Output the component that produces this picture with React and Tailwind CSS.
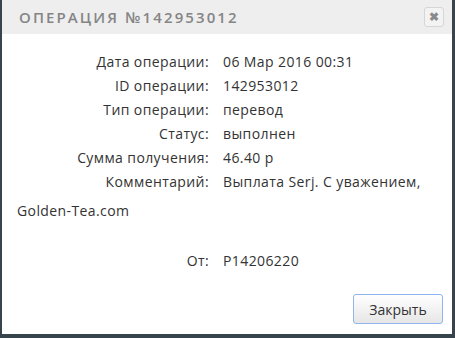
export default function App() {
  const rows = [
    ["Дата операции:", "06 Мар 2016 00:31"],
    ["ID операции:", "142953012"],
    ["Тип операции:", "перевод"],
    ["Статус:", "выполнен"],
    ["Сумма получения:", "46.40 р"],
    ["Комментарий:", "Выплата Serj. С уважением,"],
  ];
  return (
    <div className="w-[455px] h-[338px] bg-[#37444c] overflow-hidden" style={{ fontFamily: '"Open Sans", "Liberation Sans", sans-serif' }}>
      <div className="ml-[2px] w-[450px] h-[334px] bg-white flex flex-col">
        <div className="h-[34px] bg-[#eeeeee] flex items-center justify-between pl-[17px] pr-[8px]">
          <div className="text-[15px] font-semibold tracking-[2.1px] text-[#858585] leading-none">ОПЕРАЦИЯ №142953012</div>
          <div className="w-[20px] h-[20px] rounded-[3px] border border-[#d6d6d6] bg-[#f3f3f3] flex items-center justify-center text-[#8a8a8a] text-[12px] leading-none font-bold">✖</div>
        </div>
        <div className="flex-1 px-[15px] pt-[16px] text-[14px] text-[#333] leading-[24px] tracking-[0.4px]">
          {rows.map(([l, v]) => (
            <div key={l} className="flex">
              <span className="w-[206px] text-right pr-[14px] shrink-0">{l}</span>
              <span>{v}</span>
            </div>
          ))}
          <div className="mt-[5px]">Golden-Tea.com</div>
          <div className="flex mt-[26px]">
            <span className="w-[206px] text-right pr-[14px] shrink-0">От:</span>
            <span>P14206220</span>
          </div>
        </div>
        <div className="flex justify-end pr-[9px] pb-[10px]">
          <div className="w-[90px] h-[30px] rounded-[3px] border border-[#8fb5ef] bg-gradient-to-b from-white to-[#e6e6e6] flex items-center justify-center text-[14px] text-[#333]">Закрыть</div>
        </div>
      </div>
    </div>
  );
}
